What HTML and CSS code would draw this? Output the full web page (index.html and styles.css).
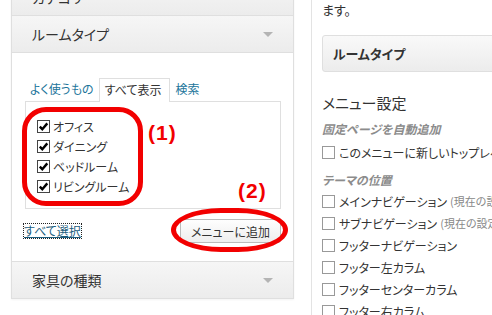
FILE: index.html
```html
<!DOCTYPE html>
<html lang="ja">
<head>
    <meta charset="UTF-8">
    <title>メニュー - ルームタイプ</title>
    <link rel="stylesheet" href="styles.css">
</head>
<body>
    <div class="screen">
        <div class="side">
            <div class="accordion">
                <div class="acc-head"><span>カテゴリ</span><i class="arrow"></i></div>
                <div class="acc-head"><span>ルームタイプ</span><i class="arrow"></i></div>
                <div class="acc-body">
                    <ul class="tabs">
                        <li class="tab"><a href="#">よく使うもの</a></li>
                        <li class="tab active">すべて表示</li>
                        <li class="tab"><a href="#">検索</a></li>
                    </ul>
                    <div class="tab-panel">
                        <label class="check"><span class="box on"><svg width="11" height="11" viewBox="0 0 11 11"><path d="M1.8 5.6 L4.3 8.2 L9.3 2.4" /></svg></span>オフィス</label>
                        <label class="check"><span class="box on"><svg width="11" height="11" viewBox="0 0 11 11"><path d="M1.8 5.6 L4.3 8.2 L9.3 2.4" /></svg></span>ダイニング</label>
                        <label class="check"><span class="box on"><svg width="11" height="11" viewBox="0 0 11 11"><path d="M1.8 5.6 L4.3 8.2 L9.3 2.4" /></svg></span>ベッドルーム</label>
                        <label class="check"><span class="box on"><svg width="11" height="11" viewBox="0 0 11 11"><path d="M1.8 5.6 L4.3 8.2 L9.3 2.4" /></svg></span>リビングルーム</label>
                    </div>
                    <div class="actions">
                        <a href="#" class="select-all">すべて選択</a>
                        <button class="btn">メニューに追加</button>
                    </div>
                </div>
                <div class="acc-head"><span>家具の種類</span><i class="arrow"></i></div>
            </div>
        </div>

        <div class="main">
            <p class="lead">ます。</p>
            <div class="menu-item">ルームタイプ</div>

            <h3 class="settings-title">メニュー設定</h3>
            <div class="group-title">固定ページを自動追加</div>
            <label class="opt"><span class="box"></span>このメニューに新しいトップレベルページを自動的に追加</label>

            <div class="group-title theme">テーマの位置</div>
            <label class="opt"><span class="box"></span>メインナビゲーション <small>(現在の設定: グローバルナビ)</small></label>
            <label class="opt"><span class="box"></span>サブナビゲーション <small>(現在の設定: サブメニュー)</small></label>
            <label class="opt"><span class="box"></span>フッターナビゲーション</label>
            <label class="opt"><span class="box"></span>フッター左カラム</label>
            <label class="opt"><span class="box"></span>フッターセンターカラム</label>
            <label class="opt"><span class="box"></span>フッター右カラム</label>
        </div>

        <!-- annotations drawn over the screenshot -->
        <div class="mark mark-1"></div>
        <div class="mark mark-2"></div>
        <div class="note note-1">(1)</div>
        <div class="note note-2">(2)</div>
    </div>
</body>
</html>
```

FILE: styles.css
```css
body {
    margin: 0;
    background-color: #fff;
    font-family: "Noto Sans CJK JP", "Noto Sans", sans-serif;
    font-feature-settings: "palt";
    color: #333;
}

.screen {
    position: relative;
    display: flex;
    width: 492px;
    height: 315px;
    overflow: hidden;
}

/* left column */

.side {
    width: 311px;
    flex-shrink: 0;
    padding-left: 11px;
    box-sizing: border-box;
}

.accordion {
    width: 281px;
    margin-top: -21px;
    border: 1px solid #dfdfdf;
    border-top: none;
    box-shadow: 0 1px 2px rgba(0, 0, 0, 0.05);
}

.acc-head {
    display: flex;
    align-items: center;
    justify-content: space-between;
    height: 36px;
    padding: 0 20px 0 20px;
    background: linear-gradient(#f6f6f6, #ececec);
    border-bottom: 1px solid #dfdfdf;
    font-size: 14px;
    color: #333;
}

.acc-head:last-child {
    border-bottom: none;
}

.arrow {
    width: 0;
    height: 0;
    border-left: 5px solid transparent;
    border-right: 5px solid transparent;
    border-top: 5px solid #b4b4b4;
}

.acc-body {
    padding: 25px 12px 18px 13px;
    border-bottom: 1px solid #dfdfdf;
    background-color: #fff;
}

.tabs {
    display: flex;
    margin: 0;
    padding: 0;
    list-style: none;
    font-size: 12px;
}

.tab {
    height: 23px;
    line-height: 22px;
    padding: 0 5px;
    box-sizing: border-box;
}

.tab a {
    color: #21759b;
    text-decoration: none;
}

.tab.active {
    border: 1px solid #dfdfdf;
    border-bottom: none;
    background-color: #fff;
    margin-bottom: -1px;
    height: 24px;
    padding: 0 8px 0 5px;
    position: relative;
}

.tab-panel {
    border: 1px solid #dfdfdf;
    padding: 14px 11px 12px;
}

.check {
    display: flex;
    align-items: center;
    height: 20px;
    font-size: 12px;
    color: #333;
}

.box {
    display: inline-flex;
    align-items: center;
    justify-content: center;
    width: 13px;
    height: 13px;
    box-sizing: border-box;
    border: 1px solid #999;
    background-color: #fff;
    margin-right: 4px;
    flex-shrink: 0;
}

.box.on {
    border-color: #444;
    margin-right: 3px;
}

.box svg path {
    fill: none;
    stroke: #000;
    stroke-width: 2.4;
}

.actions {
    display: flex;
    align-items: center;
    justify-content: space-between;
    margin-top: 10px;
}

.select-all {
    margin-left: -1px;
    font-size: 12px;
    line-height: 14px;
    color: #1c5d7d;
    outline: 1px dotted #222;
}

.btn {
    width: 101px;
    height: 24px;
    padding: 0;
    border: 1px solid #bbb;
    border-radius: 3px;
    background: linear-gradient(#fefefe, #eeeeee);
    font-family: inherit;
    font-feature-settings: "palt";
    font-size: 12px;
    color: #333;
}

/* right column */

.main {
    flex: 1;
    min-width: 0;
    border-left: 1px solid #e3e3e3;
    padding-left: 10px;
    white-space: nowrap;
    overflow: hidden;
}

.lead {
    margin: 0;
    height: 20px;
    line-height: 20px;
    font-size: 13px;
    color: #333;
}

.menu-item {
    width: 300px;
    height: 37px;
    margin-top: 15px;
    padding-left: 10px;
    box-sizing: border-box;
    border: 1px solid #dfdfdf;
    border-radius: 3px;
    background: linear-gradient(#f9f9f9, #ececec);
    font-size: 13px;
    font-weight: bold;
    line-height: 35px;
    color: #333;
}

.settings-title {
    margin: 20px 0 0;
    height: 22px;
    line-height: 22px;
    font-size: 15px;
    font-weight: normal;
    color: #333;
}

.group-title {
    margin-top: 5px;
    height: 20px;
    line-height: 20px;
    font-size: 12px;
    font-style: italic;
    font-weight: bold;
    color: #8c8c8c;
}

.group-title.theme {
    margin-top: 7px;
}

.opt {
    display: flex;
    align-items: center;
    height: 22px;
    font-size: 12px;
    color: #333;
}

.opt:nth-of-type(1) {
    margin-top: 2px;
}

.opt small {
    margin-left: 3px;
    font-size: 11px;
    color: #888;
}

/* red annotations */

.mark {
    position: absolute;
    border: 5px solid #f20000;
    box-sizing: border-box;
}

.mark-1 {
    left: 22px;
    top: 107px;
    width: 121px;
    height: 99px;
    border-radius: 24px;
}

.mark-2 {
    left: 171px;
    top: 208px;
    width: 117px;
    height: 44px;
    border-radius: 50px / 22px;
}

.note {
    position: absolute;
    font-family: "Liberation Sans", Arial, sans-serif;
    font-size: 21px;
    font-weight: bold;
    line-height: 21px;
    letter-spacing: 1px;
    color: #f20000;
}

.note-1 {
    left: 148px;
    top: 122px;
}

.note-2 {
    left: 238px;
    top: 180px;
}
```
